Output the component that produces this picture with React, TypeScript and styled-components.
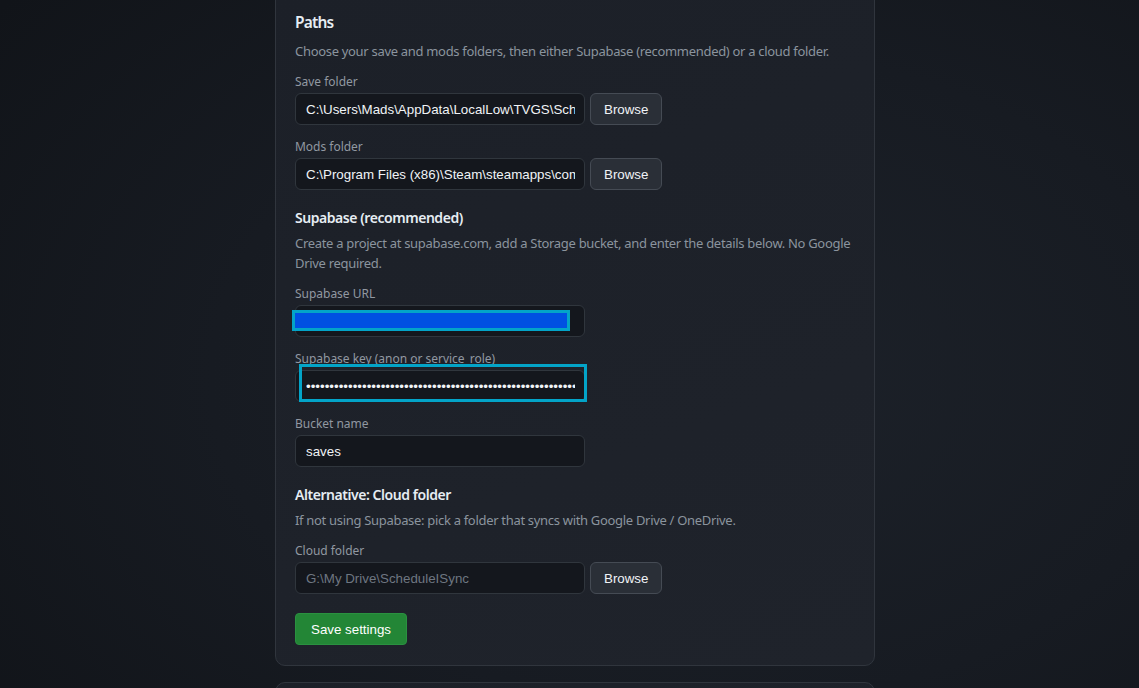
import React from 'react';
import styled, { createGlobalStyle } from 'styled-components';

// ページ全体の既定スタイル
const GlobalStyle = createGlobalStyle`
  html, body {
    margin: 0;
    padding: 0;
    height: 100%;
    overflow: hidden;
  }
  body {
    background: radial-gradient(ellipse 900px 600px at 62% 55%, #1d222a 0%, #171b22 55%, #111419 100%);
    font-family: "Noto Sans", "Open Sans", sans-serif;
    color: #e6edf3;
  }
`;

const App = () => {
  return (
    <>
      <GlobalStyle />
      <Page>
        <CardColumn>
          <Card>
            <Title>Paths</Title>
            <Desc>Choose your save and mods folders, then either Supabase (recommended) or a cloud folder.</Desc>

            <Field>
              <Label>Save folder</Label>
              <Row>
                <Input readOnly value={'C:\\Users\\Mads\\AppData\\LocalLow\\TVGS\\Schedule I\\Saves'} />
                <BrowseButton>Browse</BrowseButton>
              </Row>
            </Field>

            <Field>
              <Label>Mods folder</Label>
              <Row>
                <Input readOnly value={'C:\\Program Files (x86)\\Steam\\steamapps\\common\\Schedule I\\Mods'} />
                <BrowseButton>Browse</BrowseButton>
              </Row>
            </Field>

            <SubTitle>Supabase (recommended)</SubTitle>
            <Desc>Create a project at supabase.com, add a Storage bucket, and enter the details below. No Google Drive required.</Desc>

            <Field>
              <Label>Supabase URL</Label>
              <Row>
                <InputWrap>
                  <Input readOnly value="" />
                  <Redact />
                </InputWrap>
              </Row>
            </Field>

            <Field>
              <Label>Supabase key (anon or service_role)</Label>
              <Row>
                <InputWrap>
                  <Input type="password" readOnly value={'x'.repeat(60)} />
                  <FocusRing />
                </InputWrap>
              </Row>
            </Field>

            <Field>
              <Label>Bucket name</Label>
              <Row>
                <Input readOnly value="saves" />
              </Row>
            </Field>

            <SubTitle>Alternative: Cloud folder</SubTitle>
            <Desc>If not using Supabase: pick a folder that syncs with Google Drive / OneDrive.</Desc>

            <Field>
              <Label>Cloud folder</Label>
              <Row>
                <Input readOnly placeholder={'G:\\My Drive\\ScheduleISync'} />
                <BrowseButton>Browse</BrowseButton>
              </Row>
            </Field>

            <SaveButton>Save settings</SaveButton>
          </Card>
          <NextCard />
        </CardColumn>
      </Page>
    </>
  );
};

export default App;

// ページ
const Page = styled.div`
  display: flex;
  justify-content: center;
  padding-left: 11px;
`;

// カードの列
const CardColumn = styled.div`
  display: flex;
  flex-direction: column;
  gap: 16px;
  width: 600px;
  margin-top: -11px;
`;

// カード
const Card = styled.div`
  display: flex;
  flex-direction: column;
  background: linear-gradient(160deg, #1c2028 0%, #1f232b 100%);
  border: 1px solid #30353d;
  border-radius: 10px;
  padding: 20px 20px 20px 19px;
`;

// 次のカード(下端で切れる)
const NextCard = styled(Card)`
  height: 120px;
`;

// セクション見出し
const Title = styled.div`
  font-size: 15.5px;
  line-height: 24px;
  font-weight: 600;
  color: #e6edf3;
  letter-spacing: -0.8px;
`;

// 小見出し
const SubTitle = styled.div`
  font-size: 14px;
  line-height: 20px;
  font-weight: 600;
  color: #e6edf3;
  margin-top: 16px;
  padding-top: 2px;
  margin-bottom: -2px;
  letter-spacing: -0.45px;
`;

// 説明文
const Desc = styled.div`
  font-size: 13px;
  line-height: 20px;
  color: #8b949e;
  margin-top: 6px;
  padding-top: 1px;
  margin-bottom: 11px;
  letter-spacing: -0.31px;
`;

// 入力欄のまとまり
const Field = styled.div`
  display: flex;
  flex-direction: column;
  & + & {
    margin-top: 12px;
  }
`;

// ラベル
const Label = styled.div`
  font-size: 12px;
  line-height: 16px;
  color: #9198a1;
  padding-top: 2px;
  margin-bottom: 3px;
  letter-spacing: -0.02px;
`;

// 入力とボタンの行
const Row = styled.div`
  display: flex;
  gap: 5px;
`;

// 重なり用の入力ラッパー
const InputWrap = styled.div`
  position: relative;
  display: flex;
`;

// 入力欄
const Input = styled.input`
  box-sizing: border-box;
  width: 290px;
  height: 32px;
  padding: 0 9px 0 10px;
  background: #14171d;
  border: 1px solid #30363d;
  border-radius: 6px;
  color: #f0f3f6;
  font-family: "Liberation Sans", Arial, sans-serif;
  font-size: 13.333px;
  outline: none;
  &::placeholder {
    color: #6e7681;
  }
`;

// URLの塗りつぶし
const Redact = styled.div`
  position: absolute;
  left: -3px;
  top: 5px;
  width: 278px;
  height: 21px;
  box-sizing: border-box;
  background: #0050e2;
  border: 3px solid #03a4c8;
`;

// フォーカス枠
const FocusRing = styled.div`
  position: absolute;
  left: 4px;
  top: -6px;
  width: 288px;
  height: 38px;
  box-sizing: border-box;
  border: 3px solid #03a4c8;
  pointer-events: none;
`;

// 参照ボタン
const BrowseButton = styled.button`
  box-sizing: border-box;
  height: 32px;
  padding: 0 13px;
  background: #2a2f37;
  border: 1px solid #454b54;
  border-radius: 6px;
  color: #f0f3f6;
  font-family: "Liberation Sans", Arial, sans-serif;
  font-size: 13.333px;
`;

// 保存ボタン
const SaveButton = styled.button`
  align-self: flex-start;
  box-sizing: border-box;
  height: 32px;
  margin-top: 19px;
  padding: 0 15px;
  background: #238636;
  border: 1px solid #2a9140;
  border-radius: 4px;
  color: #ffffff;
  font-family: "Liberation Sans", Arial, sans-serif;
  font-size: 13.333px;
`;
